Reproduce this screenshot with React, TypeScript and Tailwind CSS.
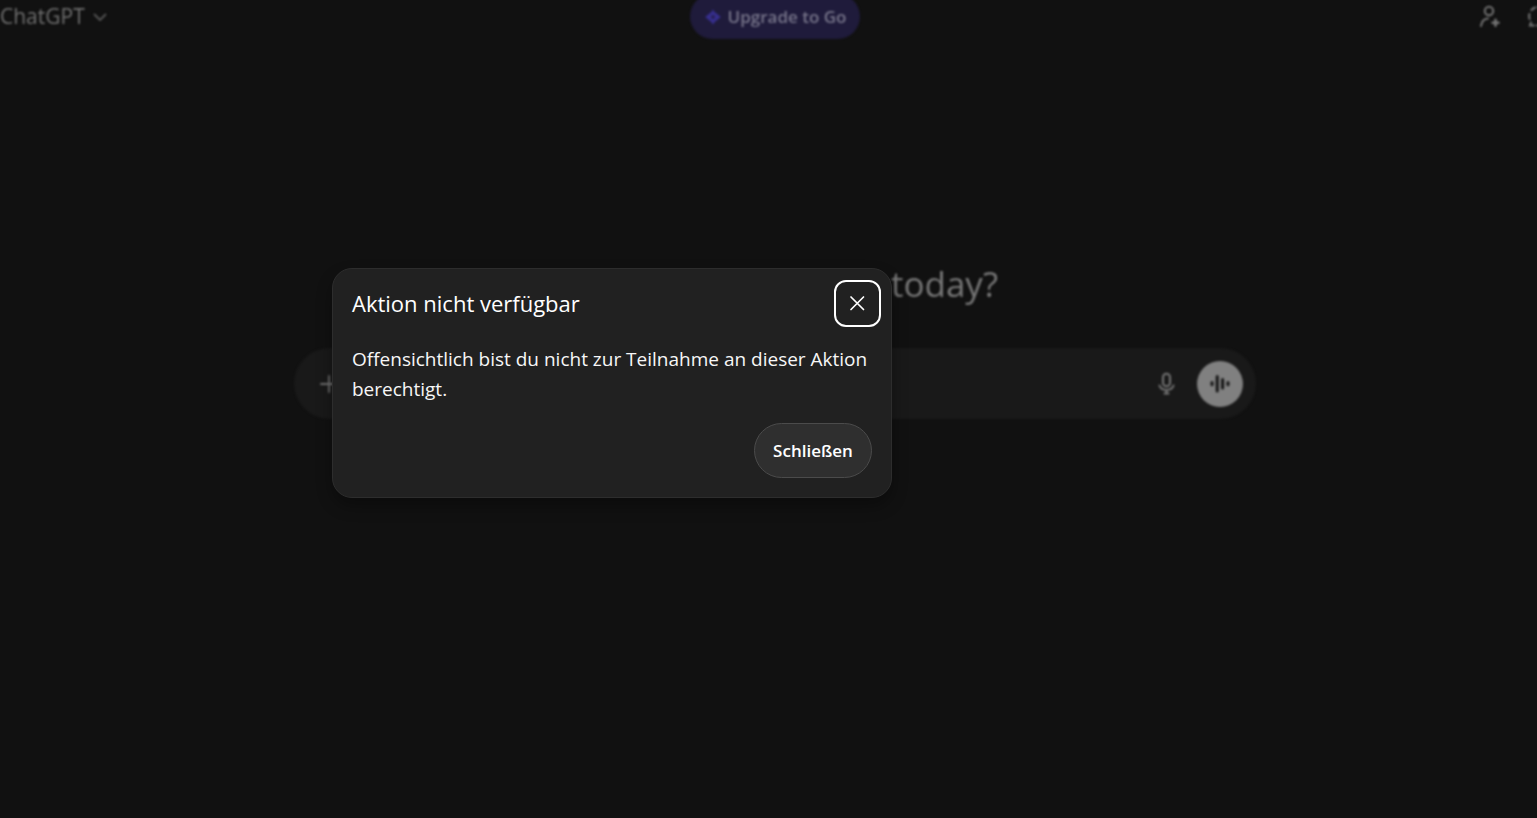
import React from "react";

function UpgradeIcon() {
  return (
    <svg width="18" height="18" viewBox="0 0 18 18" fill="none" aria-hidden="true">
      <path
        d="M9 1.200c1 2.200 1.800 2.900 3 3.800C13.200 6 14.800 7.400 16.800 9c-2 1.600-3.600 3-4.800 4-1.200.9-2 1.600-3 3.800-1-2.200-1.800-2.900-3-3.800C4.800 12 3.200 10.600 1.200 9 3.200 7.400 4.800 6 6 5c1.200-.9 2-1.600 3-3.800z"
        fill="#362e8c"
      />
      <circle cx="9" cy="9" r="2" fill="#272155" />
    </svg>
  );
}

function AddPersonIcon() {
  return (
    <svg width="24" height="24" viewBox="0 0 24 24" fill="none" stroke="#747474" strokeWidth="2" strokeLinecap="round" aria-hidden="true">
      <circle cx="11" cy="6" r="4.200" />
      <path d="M3 21c.5-4.500 3-7.300 7-7.600" />
      <path d="M17.500 14.800v6M14.500 17.800h6" strokeWidth="2.600" />
    </svg>
  );
}

function TemporaryChatIcon() {
  return (
    <svg width="24" height="24" viewBox="0 0 24 24" fill="none" stroke="#747474" strokeWidth="2" strokeLinecap="round" aria-hidden="true">
      <path d="M9 2.500a9 9 0 0 0-3.500 2.500M3.400 9a9 9 0 0 0 .2 5M5 17.500l-1 3H8M11 20.500a9 9 0 0 0 5-1M19 17.500a9 9 0 0 0 2-4M21 9.500a9 9 0 0 0-2-4M16 3a9 9 0 0 0-4-.8" />
    </svg>
  );
}

function MicIcon() {
  return (
    <svg width="24" height="24" viewBox="0 0 24 24" fill="none" stroke="#757575" strokeWidth="2" strokeLinecap="round" aria-hidden="true">
      <rect x="8" y="1.800" width="7" height="12.400" rx="3.500" />
      <path d="M4.500 13.500c1 3 3.500 4.500 7 4.500s6-1.500 7-4.500M11.500 18v3.500M9.500 21.500h4" />
    </svg>
  );
}

function VoiceIcon() {
  return (
    <svg width="24" height="24" viewBox="0 0 24 24" fill="none" stroke="#151515" strokeWidth="3" strokeLinecap="round" aria-hidden="true">
      <path d="M4 10.500v2.200M9.200 4.500v14.500M14.600 7.500v8.500M20 10.500v2.200" />
    </svg>
  );
}

function Header() {
  return (
    <header className="grid h-[45px] grid-cols-[1fr_auto_1fr] items-center">
      <button type="button" className="flex h-full items-center gap-2 justify-self-start text-[21px] text-[#707070]">
        ChatGPT
        <svg width="14" height="14" viewBox="0 0 14 14" fill="none" stroke="#555555" strokeWidth="1.800" strokeLinecap="round" strokeLinejoin="round" aria-hidden="true">
          <path d="M1.500 4.500 7 10l5.500-5.500" />
        </svg>
      </button>
      <button type="button" className="ml-[13px] flex h-full w-[170px] items-center justify-center gap-1.5 rounded-full bg-[#1f1b3b] text-[17px] font-semibold whitespace-nowrap text-[#77758a]">
        <UpgradeIcon />
        Upgrade to Go
      </button>
      <div className="-mr-[13px] flex h-full items-center gap-6 justify-self-end">
        <button type="button" aria-label="Add people">
          <AddPersonIcon />
        </button>
        <button type="button" aria-label="Temporary chat">
          <TemporaryChatIcon />
        </button>
      </div>
    </header>
  );
}

function Composer() {
  return (
    <form className="flex h-[71px] items-center rounded-full bg-[#191919] pr-[13px] pl-6">
      <button type="button" aria-label="Add" className="flex size-6 items-center justify-center">
        <svg width="24" height="24" viewBox="0 0 24 24" fill="none" stroke="#707070" strokeWidth="1.800" strokeLinecap="round" aria-hidden="true">
          <path d="M11 4v16M3 12h16" />
        </svg>
      </button>
      <input type="text" aria-label="Message" className="min-w-0 flex-1 bg-transparent outline-none" />
      <button type="button" aria-label="Dictate" className="mr-[18px]">
        <MicIcon />
      </button>
      <button type="button" aria-label="Voice mode" className="flex size-[46px] items-center justify-center rounded-full bg-[#808080]">
        <VoiceIcon />
      </button>
    </form>
  );
}

function UnavailableDialog() {
  return (
    <div className="absolute inset-0 flex items-center justify-center pr-[313px] pb-[52px]">
      <section
        role="dialog"
        aria-modal="true"
        aria-labelledby="dialog-title"
        aria-describedby="dialog-text"
        className="w-full max-w-[560px] rounded-[20px] border border-[#2d2d2d] bg-[#212121] shadow-[0_8px_16px_rgba(0,0,0,0.32)]"
      >
        <div className="flex items-center justify-between pt-[11px] pr-2.5 pl-[19px]">
          <h2 id="dialog-title" className="text-[22px] text-white">
            Aktion nicht verfügbar
          </h2>
          <button type="button" aria-label="Schließen" className="flex size-[47px] items-center justify-center rounded-xl border-2 border-white">
            <svg width="17" height="17" viewBox="0 0 17 17" fill="none" stroke="#ffffff" strokeWidth="1.700" strokeLinecap="round" aria-hidden="true">
              <path d="M2 2l12.500 12.500M14.500 2 2 14.500" />
            </svg>
          </button>
        </div>
        <div className="px-[19px] pt-[17px] pb-[19px]">
          <p id="dialog-text" className="text-[19px] leading-[30px] text-[#f7f7f7]">
            Offensichtlich bist du nicht zur Teilnahme an dieser Aktion berechtigt.
          </p>
          <div className="flex justify-end pt-[19px]">
            <button type="button" className="h-[55px] w-[118px] rounded-full border border-[#4b4b4b] bg-[#2f2f2f] text-[17px] font-semibold text-white">
              Schließen
            </button>
          </div>
        </div>
      </section>
    </div>
  );
}

export default function App() {
  return (
    <div className="relative min-h-screen overflow-hidden bg-[#111111] font-['Open_Sans','Noto_Sans',sans-serif]">
      <div className="-mt-1.5 blur-[1px]">
        <Header />
        <main className="flex flex-col items-center pt-[221px] pl-[13px]">
          <h1 className="w-full max-w-[446px] pb-10 text-right text-[35px] leading-[48px] text-[#777777]">today?</h1>
          <div className="w-full max-w-[962px]">
            <Composer />
          </div>
        </main>
      </div>
      <UnavailableDialog />
    </div>
  );
}
